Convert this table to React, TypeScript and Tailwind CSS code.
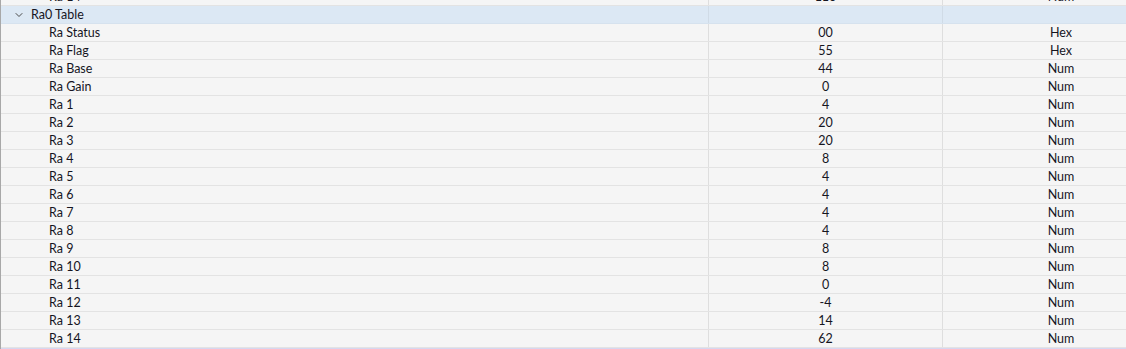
import { ChevronDown } from "lucide-react";

type Row = { name: string; value: string; format: "Hex" | "Num" };

const rows: Row[] = [
  { name: "Ra Status", value: "00", format: "Hex" },
  { name: "Ra Flag", value: "55", format: "Hex" },
  { name: "Ra Base", value: "44", format: "Num" },
  { name: "Ra Gain", value: "0", format: "Num" },
  { name: "Ra 1", value: "4", format: "Num" },
  { name: "Ra 2", value: "20", format: "Num" },
  { name: "Ra 3", value: "20", format: "Num" },
  { name: "Ra 4", value: "8", format: "Num" },
  { name: "Ra 5", value: "4", format: "Num" },
  { name: "Ra 6", value: "4", format: "Num" },
  { name: "Ra 7", value: "4", format: "Num" },
  { name: "Ra 8", value: "4", format: "Num" },
  { name: "Ra 9", value: "8", format: "Num" },
  { name: "Ra 10", value: "8", format: "Num" },
  { name: "Ra 11", value: "0", format: "Num" },
  { name: "Ra 12", value: "-4", format: "Num" },
  { name: "Ra 13", value: "14", format: "Num" },
  { name: "Ra 14", value: "62", format: "Num" },
];

const TableRow = ({ row }: { row: Row }) => (
  <div className="flex h-[18px] border-b border-[#e3e3e3] bg-[#f5f5f5]">
    <div className="flex w-[708px] flex-none items-center border-r border-[#dedede] pt-px pl-[48px]">
      {row.name}
    </div>
    <div className="flex w-[234px] flex-none items-center justify-center border-r border-[#dedede] pt-px">
      {row.value}
    </div>
    <div className="flex w-[236px] flex-none items-center justify-center pt-px">
      {row.format}
    </div>
  </div>
);

export default function App() {
  return (
    <div
      className="h-[349px] w-[1126px] overflow-hidden border-l border-[#a8a8a8] bg-[#f5f5f5] text-[12.5px] leading-none text-[#15151f]"
      style={{ fontFamily: 'Lato, "Noto Sans", sans-serif' }}
    >
      <div className="-mt-[12px] flex flex-col">
        <TableRow row={{ name: "Ra 14", value: "116", format: "Num" }} />
        <div className="flex h-[18px] border-b border-[#d6e2ee] bg-[#dce8f4]">
          <div className="flex w-[708px] flex-none items-center border-r border-[#d0dbe6] pt-px pl-[12px]">
            <ChevronDown size={12} strokeWidth={2} className="text-[#4a4a4a]" />
            <span className="ml-[6px]">Ra0 Table</span>
          </div>
          <div className="w-[234px] flex-none border-r border-[#d0dbe6]" />
          <div className="w-[236px] flex-none" />
        </div>
        {rows.map((row) => (
          <TableRow key={row.name} row={row} />
        ))}
        <div className="h-[2px] bg-[#d6d6f0]" />
      </div>
    </div>
  );
}
